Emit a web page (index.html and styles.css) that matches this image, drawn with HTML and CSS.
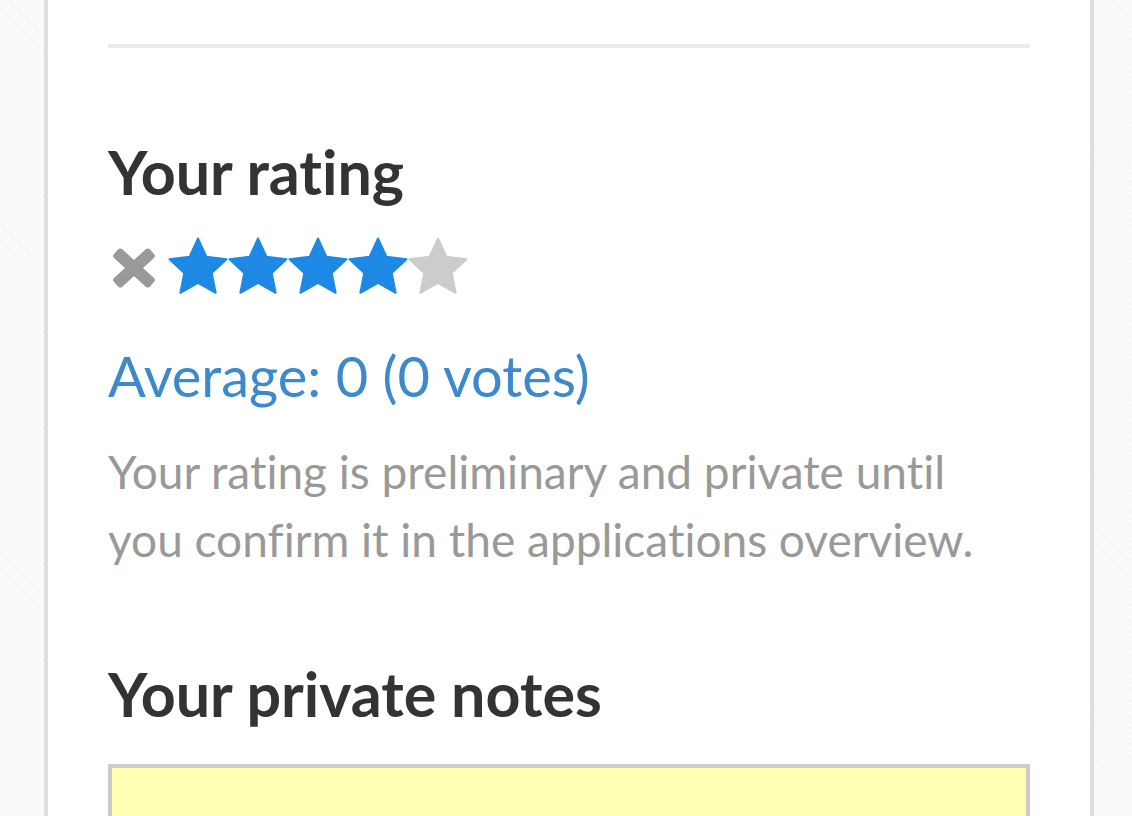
FILE: index.html
```html
<!DOCTYPE html>
<html lang="en">
<head>
<meta charset="utf-8">
<title>Your rating</title>
<link rel="stylesheet" href="styles.css">
</head>
<body>
<div class="page">
  <section class="card">
    <div class="rule"></div>
    <h2 class="heading heading-rating">Your rating</h2>
    <div class="stars">
      <svg class="clear" viewBox="0 0 44 40" width="44" height="40" aria-label="Clear rating">
        <rect x="-2.2" y="14" width="48.4" height="12" rx="3" transform="rotate(42 22 20)" fill="#999"/>
        <rect x="-2.2" y="14" width="48.4" height="12" rx="3" transform="rotate(-42 22 20)" fill="#999"/>
      </svg>
      <svg class="star on" viewBox="0 0 60 58" width="60" height="58"><polygon points="30,1.5 38.46,19.85 58.53,22.23 43.7,35.95 47.63,55.77 30,45.9 12.37,55.77 16.3,35.95 1.47,22.23 21.54,19.85"/></svg>
      <svg class="star on" viewBox="0 0 60 58" width="60" height="58"><polygon points="30,1.5 38.46,19.85 58.53,22.23 43.7,35.95 47.63,55.77 30,45.9 12.37,55.77 16.3,35.95 1.47,22.23 21.54,19.85"/></svg>
      <svg class="star on" viewBox="0 0 60 58" width="60" height="58"><polygon points="30,1.5 38.46,19.85 58.53,22.23 43.7,35.95 47.63,55.77 30,45.9 12.37,55.77 16.3,35.95 1.47,22.23 21.54,19.85"/></svg>
      <svg class="star on" viewBox="0 0 60 58" width="60" height="58"><polygon points="30,1.5 38.46,19.85 58.53,22.23 43.7,35.95 47.63,55.77 30,45.9 12.37,55.77 16.3,35.95 1.47,22.23 21.54,19.85"/></svg>
      <svg class="star off" viewBox="0 0 60 58" width="60" height="58"><polygon points="30,1.5 38.46,19.85 58.53,22.23 43.7,35.95 47.63,55.77 30,45.9 12.37,55.77 16.3,35.95 1.47,22.23 21.54,19.85"/></svg>
    </div>
    <a class="average" href="#">Average: 0 (0 votes)</a>
    <p class="note">Your rating is preliminary and private until you confirm it in the applications overview.</p>
    <h2 class="heading heading-notes">Your private notes</h2>
    <textarea class="notes"></textarea>
  </section>
</div>
</body>
</html>
```

FILE: styles.css
```css
html, body {
  margin: 0;
  padding: 0;
}
body {
  background-color: #f9f9f9;
  background-image: repeating-linear-gradient(45deg, rgba(0,0,0,0.006) 0 2px, rgba(255,255,255,0.3) 2px 4px);
  font-family: Lato, "Open Sans", sans-serif;
  font-variant-ligatures: none;
  height: 816px;
  overflow: hidden;
}
.page {
  padding-left: 44px;
}
.card {
  width: 922px;
  height: 772px;
  background: #fff;
  border-left: 4px solid #dedede;
  border-right: 4px solid #dedede;
  padding: 44px 60px 0 60px;
  box-sizing: content-box;
  overflow: hidden;
}
.rule {
  height: 4px;
  background: #ebebeb;
}
.heading {
  margin: 0;
  font-weight: 700;
  font-size: 61px;
  line-height: 72px;
  color: #333;
}
.heading-rating {
  margin-top: 88px;
}
.stars {
  display: flex;
  align-items: center;
  margin-top: 29px;
  height: 58px;
}
.clear {
  margin-left: 4px;
  margin-right: 12px;
  margin-top: 4px;
}
.star polygon {
  stroke-width: 2;
  stroke-linejoin: round;
}
.star.on polygon {
  fill: #1e88e5;
  stroke: #1e88e5;
}
.star.off polygon {
  fill: #cccccc;
  stroke: #cccccc;
}
.average {
  display: block;
  margin-top: 47px;
  font-size: 56px;
  line-height: 68px;
  color: #3c89cc;
  text-decoration: none;
}
.note {
  margin: 28px 0 0 0;
  font-size: 46px;
  line-height: 68px;
  color: #999;
}
.heading-notes {
  margin-top: 84px;
}
.notes {
  display: block;
  margin-top: 34px;
  width: 922px;
  height: 200px;
  box-sizing: border-box;
  border: 4px solid #ccc;
  background: #ffffb3;
  resize: none;
  outline: none;
}
```
